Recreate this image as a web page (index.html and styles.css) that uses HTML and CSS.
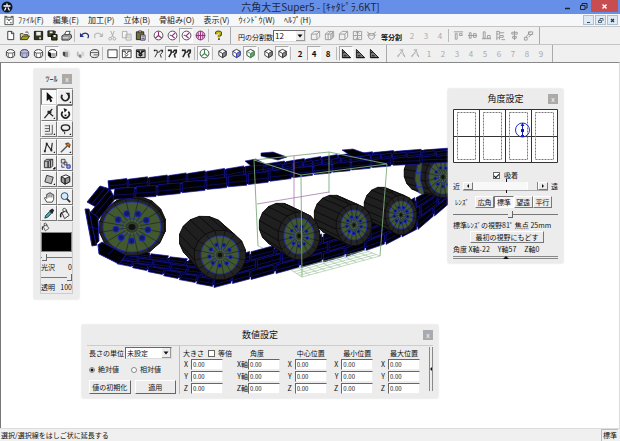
FILE: index.html
```html
<!DOCTYPE html>
<html lang="ja">
<head>
<meta charset="utf-8">
<title>六角大王Super5</title>
<link rel="stylesheet" href="styles.css">
</head>
<body>
<svg class="sprites" aria-hidden="true">
  <symbol id="logo" viewBox="0 0 12 12"><circle cx="6" cy="6" r="5.5" fill="#101828"/><path d="M2.500 5h7M6 2.500V5M5 6.500 3.500 9.500M7 6.500l1.500 3" stroke="#fff" stroke-width="1.300"/></symbol>
  <symbol id="doc" viewBox="0 0 12 12"><path d="M1.500 2.500h9v8h-9z" fill="#fff" stroke="#444"/><path d="M1 1.500h3M8 1.500h3M3 4.500h2l1 2 1-2h2M4 8.500h1M7 8.500h2" stroke="#444" fill="none"/></symbol>
  <symbol id="new" viewBox="0 0 12 12"><path d="M3 1.500h4.500l2 2v7H3z" fill="#fff" stroke="#333"/><path d="M7 1.500v2.500h2.500" stroke="#333" fill="none"/></symbol>
  <symbol id="open" viewBox="0 0 12 12"><path d="M1.500 10V4h3l1 1h4v2" fill="#e8e070" stroke="#444"/><path d="M1.500 10.500 4 6.500h7.500l-2.500 4z" fill="#a8a010" stroke="#333"/><path d="M7 2.500q2-1.500 3.500 1" stroke="#333" fill="none"/></symbol>
  <symbol id="save" viewBox="0 0 12 12"><path d="M1.500 1.500h9v9h-9z" fill="#333a18" stroke="#111"/><path d="M3.500 2h5v4h-5z" fill="#eee"/><path d="M7 8h1.500v2H7z" fill="#fff"/></symbol>
  <symbol id="saves" viewBox="0 0 12 12"><path d="M1 1h7v6H1zM5 5h6v6H5z" fill="#3c4012" stroke="#111"/><path d="M3 1.500h3v2H3zM7 5.500h2.500v2H7z" fill="#eee"/><path d="M9 1v3" stroke="#222"/></symbol>
  <symbol id="print" viewBox="0 0 12 12"><path d="M1 6.500 4 4.500h6.500l1 2v2l-3 2.500H1z" fill="#999" stroke="#333"/><path d="m4 5 1.500-3.500H10L8.500 5z" fill="#fff" stroke="#444"/><path d="M2 8.500h6" stroke="#eee"/></symbol>
  <symbol id="undo" viewBox="0 0 12 12"><path d="M2 6.500Q5 2 9 4q2.500 2 .5 5" stroke="currentColor" stroke-width="1.300" fill="none"/><path d="M1 3v4.500h4.500z" fill="currentColor"/></symbol>
  <symbol id="cut" viewBox="0 0 12 12"><path d="M4 1l3 7M8 1 5 8" stroke="#aaa"/><circle cx="3.500" cy="9.500" r="1.500" fill="none" stroke="#aaa"/><circle cx="8" cy="9.500" r="1.500" fill="none" stroke="#aaa"/></symbol>
  <symbol id="copy" viewBox="0 0 12 12"><path d="M1.500 1.500h5v7h-5zM5.500 4.500h5.500v6.500H5.500z" fill="#f4f4f4" stroke="#aaa"/><path d="M7 6.500h3M7 8.500h3" stroke="#bbb"/></symbol>
  <symbol id="paste" viewBox="0 0 12 12"><path d="M1.500 2h8v8.500h-8z" fill="#77702a" stroke="#222"/><path d="M4 1h3v2H4z" fill="#ddd" stroke="#333"/><path d="M6 5.500h5v5.500H6z" fill="#fff" stroke="#335"/><path d="M7 7.500h3M7 9.500h3" stroke="#335"/></symbol>
  <symbol id="ball" viewBox="0 0 12 12"><circle cx="6" cy="6" r="4.800" fill="#fff" stroke="#444"/><path d="M6 1.500V6L2.500 9M6 6l3.500 3" stroke="currentColor" stroke-width="1.200" fill="none"/></symbol>
  <symbol id="ball2" viewBox="0 0 12 12"><circle cx="6" cy="6" r="4.800" fill="#fff" stroke="#444"/><path d="M9 3 5.500 6.500 3 5.500M5.500 6.500l3 2.500" stroke="#a03090" stroke-width="1.200" fill="none"/></symbol>
  <symbol id="globe" viewBox="0 0 12 12"><circle cx="6" cy="6" r="4.800" fill="#f6cfe8" stroke="#703068"/><path d="M6 1v10M1 6h10M3.500 2.500v7M8.500 2.500v7" stroke="#902878"/></symbol>
  <symbol id="help" viewBox="0 0 12 12"><path d="M3.500 4.500V2.800q2.500-2 5 0V5L6.500 6.500V8" stroke="#555000" stroke-width="2.600" fill="none"/><path d="M4 4V3q2-1.500 4 0v1.500L6.500 6v1.500" stroke="#d8c800" stroke-width="1.200" fill="none"/><path d="M5.500 9h2v2h-2z" fill="#555000"/></symbol>
  <symbol id="cyl" viewBox="0 0 12 12"><path d="M1.500 4q1-2.300 4.500-2.300T10.500 4v4.500Q9.500 10.500 6 10.500T1.500 8.500z" fill="#fff" stroke="#333"/><path d="M1.500 4 3.500 5.500h5l2-1.500M3.500 5.500v4.500M8.500 5.500v4.500" stroke="#555" fill="none"/></symbol>
  <symbol id="cylb" viewBox="0 0 12 12"><path d="M1.500 4q1-2.300 4.500-2.300T10.500 4v4.500Q9.500 10.500 6 10.500T1.500 8.500z" fill="#b8bce8" stroke="#334"/><path d="M1.500 4 3.500 5.500h5l2-1.500M3.500 5.500v4.500M8.500 5.500v4.500" stroke="#778" fill="none"/></symbol>
  <symbol id="cyld" viewBox="0 0 12 12"><path d="M1.500 4q1-2.300 4.500-2.300T10.500 4v4.500Q9.500 10.500 6 10.500T1.500 8.500z" fill="#fff" stroke="#222"/><path d="M1.500 4 4.500 5.500V10.500L1.500 8.500z" fill="#111"/><path d="M4.500 5.500h5v4h-5z" fill="#aaa"/></symbol>
  <symbol id="shade" viewBox="0 0 12 12"><path d="M2 4h3v6L2 8z" fill="#444"/><path d="M5 4h3v6H5z" fill="#999"/><path d="M8 4h2v5L8 10zM2 3.500 5 2h3l2 1.500z" fill="#ddd"/></symbol>
  <symbol id="shade2" viewBox="0 0 12 12"><path d="M2 4h2v5H2z" fill="#bbb"/><path d="M4 7h3v4L4 10z" fill="#888"/><path d="M7 4h3v5H7z" fill="#d5d5d5"/></symbol>
  <symbol id="cylr" viewBox="0 0 12 12"><path d="M1.500 4q1-2.300 5-2.300T10.500 4v4.500Q9.500 10.500 6 10.500T1.500 8.500z" fill="#eee" stroke="#333"/><path d="M2 5h8M5 7.500h5" stroke="#555"/></symbol>
  <symbol id="sq" viewBox="0 0 12 12"><path d="M1 2h10v8.500H1z" fill="#fff" stroke="#333"/></symbol>
  <symbol id="frame" viewBox="0 0 12 12"><path d="M1.500 2h9.500v8.500H1.500z" fill="#fff" stroke="#333"/><path d="M2 3.500h2.500v1.500L6 6l1.500-1V3.500h3M4 7l2 1.500L8 7M4 9.500h1" stroke="#222" fill="none"/></symbol>
  <symbol id="framed" viewBox="0 0 12 12"><path d="M1.500 2h9.500v8.500H1.500z" fill="#ccc" stroke="#111"/><path d="M2 3.500h2.500v1.500L6 6l1.500-1V3.500h3M4 7l2 1.500L8 7" stroke="#111" stroke-width="1.600" fill="none"/></symbol>
  <symbol id="fig" viewBox="0 0 12 12"><path d="M1 2.500h3.500v3L2 10M4.500 4.500H7L8 2.500h2v2.500L8 7l1 3.500" stroke="#222" stroke-width="var(--w,1)" fill="none"/><path d="M1 2h1.500v1.500H1zM9.500 2H11v2H9.500z" fill="#222"/></symbol>
  <symbol id="hex" viewBox="0 0 12 12"><path d="m2 3.500 4-2 4 2v4.500l-4 2.500L2 8z" fill="#fff" stroke="#333"/><path d="M6 6 2 3.500M6 6v4.500L10 8V3.500z" fill="#888" stroke="currentColor"/></symbol>
  <symbol id="tri" viewBox="0 0 12 12"><path d="M1.500 1.500v9h9z" fill="#777" stroke="#111"/><path d="M3 8.500h3M2 5h2M1.500 10.500h9" stroke="#111"/></symbol>
  <symbol id="box" viewBox="0 0 12 12"><path d="M1.500 4.500h6v6h-6zM1.500 4.500l3-3h6v6l-3 3M7.500 4.500l3-3" fill="none" stroke="#999"/></symbol>
  <symbol id="box2" viewBox="0 0 12 12"><path d="M1.500 4.500h6v6h-6zM1.500 4.500l3-3h6v6l-3 3M7.500 4.500l3-3M4.500 4.500v6M4.500 4.500l3-3M9 3v6" fill="none" stroke="#999"/></symbol>
  <symbol id="boxx" viewBox="0 0 12 12"><path d="M1.500 1.500h9v9h-9zM6 2v8M2 6h8M4 4l2-2 2 2M4 8l2 2 2-2" fill="none" stroke="#999"/></symbol>
  <symbol id="boxo" viewBox="0 0 12 12"><path d="m1 2 3 2M11 2 8 4M3 4h6v4.500l-3 2-3-2zM3 5q3 2 6 0M1 5l2 2M11 5 9 7" fill="none" stroke="#999"/></symbol>
  <symbol id="al1" viewBox="0 0 12 12"><path d="M1 2h10M2.500 4h2v6h-2zM7 4h3v2H7z" stroke="#999" fill="none"/></symbol>
  <symbol id="al2" viewBox="0 0 12 12"><path d="M1 6h10M2.500 3h2v6h-2zM7 4h3v4H7z" stroke="#999" fill="#eee"/></symbol>
  <symbol id="al3" viewBox="0 0 12 12"><path d="M1 9.500h10M2.500 2h2v7h-2zM7 6h3v3H7z" stroke="#999" fill="none"/></symbol>
  <symbol id="al4" viewBox="0 0 12 12"><path d="M2 1.500h3v3H2M5 3h5M2 8.500h3v2M5 6h4v2H5zM7 10.500h4M2 1v10" stroke="#999" fill="none"/></symbol>
  <symbol id="al5" viewBox="0 0 12 12"><path d="M6 1v10M3 2.500h6v2H3zM4 7h4v2H4z" stroke="#999" fill="#eee"/></symbol>
  <symbol id="al6" viewBox="0 0 12 12"><path d="M1.500 8h3v3h-3zM6 2h4.500v3H6zM3 8l5-6M6 8 10 4" stroke="#999" fill="none"/></symbol>
  <symbol id="brk" viewBox="0 0 12 12"><path d="M4 2h4M7 2 2 10M6.500 3l3 6M1.500 9l1.500-2M8 8l2 2M6 6l1 1" stroke="#aaa" fill="none"/></symbol>
  <symbol id="t-arrow" viewBox="0 0 14 14"><path d="M4 1v10l2.500-2.500L8 12l2-1-1.700-3.200H11z" fill="#111"/></symbol>
  <symbol id="t-rot" viewBox="0 0 14 14"><path d="M3.500 4a4 4 0 1 0 6.500 0" fill="none" stroke="#222" stroke-width="1.700"/><path d="M7 2h4.500v4.500z" fill="#222"/><path d="M11 13h2v-2z" fill="#111"/></symbol>
  <symbol id="t-line" viewBox="0 0 14 14"><path d="M1.500 12 10 2M5 5l6 5" fill="none" stroke="#222" stroke-width="1.300"/><path d="M5 4h4v3H5zM11 13h2v-2z" fill="#222"/></symbol>
  <symbol id="t-rotd" viewBox="0 0 14 14"><path d="M4 5a4 4 0 1 0 6 0" fill="none" stroke="#222" stroke-width="1.800"/><path d="M5 1l4 2-3 3zM6 8h2v2H6z" fill="#222"/></symbol>
  <symbol id="t-lad" viewBox="0 0 14 14"><path d="M2 3h5M2 6h5M2 9h3M2 12h8V2M7 2v7M4 9h3" fill="none" stroke="#555"/><path d="M11 13h2v-2z" fill="#111"/></symbol>
  <symbol id="t-las" viewBox="0 0 14 14"><ellipse cx="7" cy="5" rx="4.500" ry="3" fill="none" stroke="#222" stroke-width="1.500"/><path d="M4 7q-1 2 1 2t1 3" fill="none" stroke="#222"/><path d="M11 13h2v-2z" fill="#111"/></symbol>
  <symbol id="t-poly" viewBox="0 0 14 14"><path d="M2 11 4 3l5 7 1-8" fill="none" stroke="#222" stroke-width="1.200"/><path d="M3 2h2v2H3zM8 9h2v2H8zM1 10h2v2H1zM11 13h2v-2z" fill="#222"/></symbol>
  <symbol id="t-pen" viewBox="0 0 14 14"><path d="M2 12 9 5" stroke="#555" stroke-width="1.500"/><path d="m7 3 4 4 1-3-2-2z" fill="#d87820" stroke="#503010"/><path d="M11 13h2v-2z" fill="#111"/></symbol>
  <symbol id="t-ext" viewBox="0 0 14 14"><path d="M1.500 4.500h4v7h-4zM1.500 4.500l2-2h7v7l-2 2h-3v-7l5-2" fill="#bbb" stroke="#333"/><path d="M8 4v7M11 13h2v-2z" stroke="#222"/></symbol>
  <symbol id="t-mul" viewBox="0 0 14 14"><path d="M2.500 2.500h4v4h-4zM5.500 5.500h3v3h-3z" fill="#ddd" stroke="#444"/><path d="M8.500 8.500H12V12H8.500z" fill="#9ab0ff" stroke="#2030a0"/><path d="M3 8v3h3" fill="none" stroke="#2030a0"/></symbol>
  <symbol id="t-face" viewBox="0 0 14 14"><path d="m4 2.500 7 2-2 7-7-2z" fill="#bbb" stroke="#333"/><path d="M11 13h2v-2z" fill="#111"/></symbol>
  <symbol id="t-cube" viewBox="0 0 14 14"><path d="m2.500 4 5-2 4 2v5.500l-5 2.500-4-2.500z" fill="#fff" stroke="#222"/><path d="M2.500 4 6.500 6v6L2.500 9.500zM6.500 6l5-2v5.500L6.500 12z" fill="#999" stroke="#222"/></symbol>
  <symbol id="t-hand" viewBox="0 0 14 14"><path d="M4 12 1.500 7.500 3 7l1 1V3.500h1.500V2.500H7V2h1.500v1H10v1h1.500v5L10 12z" fill="#fff" stroke="#444"/><path d="M5.500 4v3M7.500 3v4M9.500 4v3" stroke="#555"/></symbol>
  <symbol id="t-zoom" viewBox="0 0 14 14"><path d="m8 8 4 4" stroke="#333" stroke-width="2"/><circle cx="6" cy="5.500" r="3.700" fill="#cfeaff" stroke="#246"/></symbol>
  <symbol id="t-drop" viewBox="0 0 14 14"><path d="m2 12 1-3 4-4 2 2-4 4z" fill="#38b8b8" stroke="#234"/><path d="m6.500 4 3.500 3.500 2-4-2-2z" fill="#222"/></symbol>
  <symbol id="t-fill" viewBox="0 0 14 14"><path d="M3 6 8 4l3 5-5 3.500z" fill="#eee" stroke="#333"/><path d="M5 6q-2-5 1-4.500T8 6" fill="none" stroke="#333"/><path d="M3 6q-2 2-1 5" stroke="#222" stroke-width="1.500" fill="none"/></symbol>
</svg>

<header class="titlebar">
  <svg class="icon"><use href="#logo"/></svg>
  <h1 class="title">六角大王Super5 - [ｷｬﾀﾋﾟﾗ.6KT]</h1>
  <div class="winbtns">
    <button class="winbtn" aria-label="最小化"><svg viewBox="0 0 9 9"><path d="M2 6.500h5" stroke="#222" stroke-width="1.500"/></svg></button>
    <button class="winbtn" aria-label="元に戻す"><svg viewBox="0 0 9 9"><path d="M1.500 3.500h4.500v4H1.500zM3 3V1.500h5V6H6.500" stroke="#222" fill="none"/></svg></button>
    <button class="winbtn winbtn-close" aria-label="閉じる"><svg viewBox="0 0 9 9"><path d="m2.500 2.500 4 4M6.500 2.500l-4 4" stroke="#fff" stroke-width="1.400"/></svg></button>
  </div>
</header>

<nav class="menubar">
  <svg class="icon"><use href="#doc"/></svg>
  <a href="#">ﾌｧｲﾙ(F)</a><a href="#">編集(E)</a><a href="#">加工(P)</a><a href="#">立体(B)</a><a href="#">骨組み(O)</a><a href="#">表示(V)</a><a href="#">ｳｨﾝﾄﾞｳ(W)</a><a href="#">ﾍﾙﾌﾟ(H)</a>
  <div class="mdi">
    <button aria-label="文書を最小化"><svg viewBox="0 0 9 9"><path d="M3 6.500h3" stroke="#345"/></svg></button>
    <button aria-label="文書を元に戻す"><svg viewBox="0 0 9 9"><path d="M2.500 4.500h3v2h-3zM4 4V2.500h3V5" stroke="#567" fill="none"/></svg></button>
    <button aria-label="文書を閉じる"><svg viewBox="0 0 9 9"><path d="m3 3 3 3M6 3 3 6" stroke="#234" stroke-width="1.200"/></svg></button>
  </div>
</nav>

<div class="toolbar">
  <div class="group">
    <button aria-label="新規"><svg><use href="#new"/></svg></button><button aria-label="開く"><svg><use href="#open"/></svg></button><button aria-label="保存"><svg><use href="#save"/></svg></button><button aria-label="別名保存"><svg><use href="#saves"/></svg></button><button aria-label="印刷"><svg><use href="#print"/></svg></button>
    <i class="sep"></i>
    <button class="navy" aria-label="取り消し"><svg><use href="#undo"/></svg></button><button class="off flip" aria-label="やり直し"><svg><use href="#undo"/></svg></button><button aria-label="切り取り"><svg><use href="#cut"/></svg></button><button aria-label="コピー"><svg><use href="#copy"/></svg></button><button aria-label="貼り付け"><svg><use href="#paste"/></svg></button>
    <i class="sep"></i>
    <button class="plum" aria-label="正面"><svg><use href="#ball"/></svg></button><button aria-label="側面"><svg><use href="#ball2"/></svg></button><button class="down" aria-label="斜め"><svg><use href="#ball2"/></svg></button><button aria-label="四面"><svg><use href="#globe"/></svg></button>
    <i class="sep"></i>
    <button aria-label="説明"><svg><use href="#help"/></svg></button>
  </div>
  <div class="group group-wide">
    <label for="div">円の分割数</label>
    <span class="combo combo-div"><select id="div"><option>12</option></select><svg viewBox="0 0 7 9"><path d="M1 3.500h5l-2.500 3z"/></svg></span>
    <button aria-label="面"><svg><use href="#box"/></svg></button><button aria-label="分割"><svg><use href="#box2"/></svg></button><button aria-label="箱"><svg><use href="#box"/></svg></button><button aria-label="十字"><svg><use href="#boxx"/></svg></button><button aria-label="開口"><svg><use href="#boxo"/></svg></button>
    <b class="caption">等分割</b>
    <button class="off">2</button><button class="off">3</button><button class="off">4</button>
    <i class="sep"></i>
    <button aria-label="上揃え"><svg><use href="#al1"/></svg></button><button aria-label="中揃え"><svg><use href="#al2"/></svg></button><button aria-label="下揃え"><svg><use href="#al3"/></svg></button><button aria-label="左揃え"><svg><use href="#al4"/></svg></button><button aria-label="中央揃え"><svg><use href="#al5"/></svg></button><button aria-label="斜め揃え"><svg><use href="#al6"/></svg></button>
  </div>
</div>

<div class="toolbar">
  <div class="group">
    <button aria-label="線"><svg><use href="#cyl"/></svg></button><button aria-label="半透明"><svg><use href="#cylb"/></svg></button><button aria-label="隠線"><svg><use href="#cyl"/></svg></button><button class="down" aria-label="面と線"><svg><use href="#cyld"/></svg></button><button aria-label="面"><svg><use href="#shade"/></svg></button><button aria-label="滑らか"><svg><use href="#shade2"/></svg></button><button aria-label="輪郭"><svg><use href="#cylr"/></svg></button>
    <i class="sep"></i>
    <button aria-label="背景なし"><svg><use href="#sq"/></svg></button><button class="down" aria-label="背景"><svg><use href="#frame"/></svg></button><button aria-label="濃い背景"><svg><use href="#framed"/></svg></button>
    <i class="sep"></i>
    <button aria-label="骨格1"><svg><use href="#fig"/></svg></button><button class="down bold" aria-label="骨格2"><svg><use href="#fig"/></svg></button><button class="bold" aria-label="骨格3"><svg><use href="#fig"/></svg></button>
    <i class="sep"></i>
    <button class="down green" aria-label="軸"><svg><use href="#ball"/></svg></button>
    <i class="sep"></i>
    <button aria-label="面選択"><svg><use href="#hex"/></svg></button><button class="blue" aria-label="辺選択"><svg><use href="#hex"/></svg></button><button class="down green" aria-label="点選択"><svg><use href="#hex"/></svg></button>
    <i class="sep"></i>
    <button aria-label="表面"><svg><use href="#hex"/></svg></button><button class="down" aria-label="裏面"><svg><use href="#hex"/></svg></button>
    <i class="sep"></i>
    <button>2</button><button class="down">4</button><button>8</button>
    <i class="sep"></i>
    <button class="down" aria-label="定規1"><svg><use href="#tri"/></svg></button><button aria-label="定規2"><svg><use href="#tri"/></svg></button><button aria-label="定規3"><svg><use href="#tri"/></svg></button>
  </div>
  <div class="group group-wide">
    <button aria-label="関節1"><svg><use href="#brk"/></svg></button><button aria-label="関節2"><svg><use href="#brk"/></svg></button><button class="off">1</button><button class="off">2</button><button class="off">3</button><button class="off">4</button><button class="off">5</button><button class="off">6</button><button class="off">7</button><button class="off">8</button><button class="off">9</button>
  </div>
</div>

<main class="workspace">
  <svg class="scene" id="scene" viewBox="0 64 620 364" preserveAspectRatio="xMinYMin meet" role="img" aria-label="キャタピラ"></svg>

  <section class="panel tools">
    <div class="panel-head"><h2>ﾂｰﾙ</h2><button class="close" aria-label="ツールを閉じる">x</button></div>
    <div class="toolgrid">
      <button class="down" aria-label="選択"><svg><use href="#t-arrow"/></svg></button><button aria-label="回転"><svg><use href="#t-rot"/></svg></button>
      <button aria-label="線"><svg><use href="#t-line"/></svg></button><button class="down" aria-label="視点回転"><svg><use href="#t-rotd"/></svg></button>
      <button aria-label="はしご"><svg><use href="#t-lad"/></svg></button><button aria-label="投げ縄"><svg><use href="#t-las"/></svg></button>
    </div>
    <div class="toolgrid">
      <button aria-label="折れ線"><svg><use href="#t-poly"/></svg></button><button aria-label="ペン"><svg><use href="#t-pen"/></svg></button>
      <button aria-label="押し出し"><svg><use href="#t-ext"/></svg></button><button aria-label="複製"><svg><use href="#t-mul"/></svg></button>
      <button aria-label="面張り"><svg><use href="#t-face"/></svg></button><button aria-label="立方体"><svg><use href="#t-cube"/></svg></button>
    </div>
    <div class="toolgrid">
      <button aria-label="手"><svg><use href="#t-hand"/></svg></button><button aria-label="拡大"><svg><use href="#t-zoom"/></svg></button>
      <button aria-label="スポイト"><svg><use href="#t-drop"/></svg></button><button aria-label="塗り"><svg><use href="#t-fill"/></svg></button>
    </div>
    <div class="paint">
      <svg class="pail"><use href="#t-fill"/></svg>
      <button class="swatch" aria-label="色"></button>
      <input id="gloss" type="range" value="5">
      <div class="pair"><label for="gloss">光沢</label><output>0</output></div>
      <input id="alpha" type="range" value="100">
      <div class="pair"><label for="alpha">透明</label><output>100</output></div>
    </div>
  </section>

  <section class="panel angle">
    <div class="panel-head"><h2>角度設定</h2><button class="close" aria-label="角度設定を閉じる">x</button></div>
    <svg class="orbit" viewBox="0 0 105 54">
      <path d="M.5.5h104v53H.5zM26.500 0v54M52.500 0v54M78.500 0v54M0 27.500h105" fill="none" stroke="#333"/>
      <path d="M4.500 3.500h18v47h-18zM30.500 3.500h18v47h-18zM56.500 3.500h18v47h-18zM82.500 3.500h18v47h-18z" fill="none" stroke="#777" stroke-dasharray="2 1"/>
      <circle cx="69.500" cy="21" r="7" fill="none" stroke="#2030c0"/><path d="M69.500 14v14" stroke="#1020b0"/><path d="m67.500 17 2-3 2 3zM68 20h3v3h-3zM68 26h3v2h-3z" fill="#1020b0"/>
    </svg>
    <label class="snap"><input type="checkbox" checked> 吸着</label>
    <div class="distance">
      <span>近</span>
      <div class="scroll">
        <button aria-label="近づける"><svg viewBox="0 0 8 8"><path d="M5 2v4L3 4z"/></svg></button>
        <span class="trough"></span><span class="grip"></span>
        <button aria-label="遠ざける"><svg viewBox="0 0 8 8"><path d="M3 2v4l2-2z"/></svg></button>
      </div>
      <span>遠</span>
    </div>
    <div class="lens"><span>ﾚﾝｽﾞ</span><button>広角</button><button class="down">標準</button><button>望遠</button><button>平行</button></div>
    <input class="focal" type="range" value="55" aria-label="焦点">
    <p class="note">標準ﾚﾝｽﾞの視野81ﾟ 焦点 25mm</p>
    <button class="reset">最初の視野にもどす</button>
    <p class="axes"><span>角度 X軸-22</span><span>Y軸57</span><span>Z軸0</span></p>
    <div class="fold"><svg viewBox="0 0 6 3"><path d="M0 3h6L3 0z"/></svg></div>
  </section>

  <section class="panel numeric">
    <div class="panel-head"><h2>数値設定</h2><button class="close" aria-label="数値設定を閉じる">x</button></div>
    <div class="numeric-body">
      <div class="units">
        <div class="unit-row"><label for="unit">長さの単位</label><span class="combo combo-unit"><select id="unit"><option>未設定</option></select><svg viewBox="0 0 7 9"><path d="M1 3.500h5l-2.500 3z"/></svg></span></div>
        <div class="radio-row"><label><input type="radio" name="mode" checked> 絶対値</label><label><input type="radio" name="mode"> 相対値</label></div>
        <div class="btn-row"><button>値の初期化</button><button>適用</button></div>
      </div>
      <fieldset class="vec vec-size"><legend>大きさ <label class="same"><input type="checkbox"> 等倍</label></legend>
        <label>X<input value="0.00"></label><label>Y<input value="0.00"></label><label>Z<input value="0.00"></label></fieldset>
      <fieldset class="vec vec-angle"><legend>角度</legend>
        <label>X軸<input value="0.00"></label><label>Y軸<input value="0.00"></label><label>Z軸<input value="0.00"></label></fieldset>
      <fieldset class="vec"><legend>中心位置</legend>
        <label>X<input value="0.00"></label><label>Y<input value="0.00"></label><label>Z<input value="0.00"></label></fieldset>
      <fieldset class="vec"><legend>最小位置</legend>
        <label>X<input value="0.00"></label><label>Y<input value="0.00"></label><label>Z<input value="0.00"></label></fieldset>
      <fieldset class="vec"><legend>最大位置</legend>
        <label>X<input value="0.00"></label><label>Y<input value="0.00"></label><label>Z<input value="0.00"></label></fieldset>
      <div class="fold-side"><svg viewBox="0 0 3 6"><path d="M3 0v6L0 3z"/></svg></div>
    </div>
  </section>
</main>

<footer class="status"><span>選択/選択線をはしご状に延長する</span><span class="mode">標準</span></footer>
<script src="scene.js"></script>
</body>
</html>
```
FILE: styles.css
```css
* { box-sizing: border-box; }

body {
  margin: 0;
  min-height: 100vh;
  display: flex;
  flex-direction: column;
  background: #efefef;
  color: #111;
  font: 7px/9px "Noto Sans CJK JP", "Liberation Sans", sans-serif;
  overflow: hidden;
}

button, input, select, output { font: inherit; color: inherit; margin: 0; padding: 0; border-radius: 0; }
button { display: flex; align-items: center; justify-content: center; border: 0; background: none; white-space: nowrap; }
h1, h2, p { margin: 0; font-weight: 400; }
label, span, h2 { white-space: nowrap; }
.sprites { position: absolute; width: 0; height: 0; }
.icon { width: 12px; height: 12px; flex: none; }

/* Window frame */
.titlebar { display: grid; grid-template-columns: 1fr auto 1fr; align-items: center; height: 14px; padding-left: 1px; background: #668fe8; }
.title { font-size: 10px; line-height: 14px; color: #1c2840; }
.winbtns { display: flex; justify-self: end; align-self: start; margin-right: 2px; }
.winbtn { width: 16px; height: 12px; }
.winbtn svg { width: 9px; height: 9px; }
.winbtn-close { width: 27px; background: #c84d50; }

.menubar { display: flex; align-items: center; gap: 9px; height: 12px; padding-left: 3px; background: #f5f7f8; font-size: 8px; line-height: 12px; }
.menubar .icon { margin-right: -6px; height: 11px; }
.menubar a { color: #222; text-decoration: none; white-space: nowrap; }
.mdi { display: flex; gap: 1px; margin-left: auto; margin-right: 2px; }
.mdi button { width: 11px; height: 10px; border: 1px solid #a9bfd2; background: #dfeaf4; }
.mdi svg { width: 9px; height: 9px; }

/* Toolbars */
.toolbar { display: flex; height: 18px; border-top: 1px solid #c4c4c4; background: #f0f0f0; }
.group { display: flex; align-items: center; padding: 0 5px 0 3px; border-right: 1px solid #aaa; }
.group-wide { padding-left: 7px; padding-right: 4px; }
.group button { width: 14px; height: 15px; font-size: 8px; font-weight: 700; flex: none; }
.group button svg { width: 11px; height: 11px; color: #333; }
.group .down { background: #f8f8f8; border: 1px solid; border-color: #aaa #fff #fff #aaa; }
.group .off { color: #aaa; font-weight: 400; }
.group .off svg { color: #bbb; }
.group .navy svg { color: #223080; }
.group .plum svg { color: #902878; }
.group .green svg { color: #389048; }
.group .blue svg { color: #2838c0; }
.group .bold { --w: 1.6; }
.flip svg { transform: scaleX(-1); }
.sep { width: 1px; height: 13px; margin: 0 2px 0 1px; background: #bbb; }
.caption { width: 27px; text-align: center; font-weight: 700; align-self: flex-end; line-height: 13px; }
.group label { line-height: 13px; align-self: flex-end; }

.combo { position: relative; display: inline-flex; border: 1px solid; border-color: #666 #ddd #ddd #666; background: #fff; }
.combo select { appearance: none; width: 100%; border: 0; background: none; outline: 0; padding-left: 1px; }
.combo svg { position: absolute; top: 0; right: 0; width: 9px; height: 100%; background: #eee; border-right: 1px solid #999; border-bottom: 1px solid #999; }
.combo-div { width: 33px; height: 12px; margin-right: 2px; font-size: 8px; line-height: 10px; }
.combo-unit { width: 47px; height: 12px; line-height: 10px; }

/* Canvas */
.workspace { position: relative; flex: 1; background: #fff; border-top: 1px solid #888; border-left: 1px solid #777; border-right: 1px solid #ddd; }
.scene { position: absolute; top: 0; left: 0; width: 620px; }

.panel { position: absolute; background: #ececec; box-shadow: 0 0 2px #ccc; }
.panel-head { display: grid; grid-template-columns: 10px 1fr 10px; align-items: center; text-align: center; height: 20px; }
.panel-head h2 { grid-column: 2; font-size: 9px; line-height: 12px; }
.close { width: 10px; height: 10px; background: #aaa; color: #fff; font-size: 7px; line-height: 8px; }
.panel svg { fill: #111; }

input[type="range"] { appearance: none; display: block; width: 100%; height: 9px; background: linear-gradient(#777, #777) center / 100% 1px no-repeat; }
input[type="range"]::-webkit-slider-thumb { appearance: none; width: 5px; height: 7px; background: #ececec; border-right: 1px solid #666; border-bottom: 1px solid #666; }

input[type="checkbox"] { appearance: none; flex: none; width: 7px; height: 7px; border: 1px solid #666; background: #fff; display: grid; place-items: center; }
input[type="checkbox"]:checked::before { content: ""; width: 4px; height: 2px; border: solid #111; border-width: 0 0 1px 1px; transform: rotate(-45deg); }
input[type="radio"] { appearance: none; width: 6px; height: 6px; border: 1px solid #888; border-radius: 50%; background: #fff; }
input[type="radio"]:checked { background: radial-gradient(#111 1px, #fff 2px); }

.tools { left: 33px; top: 6px; width: 45px; padding: 0 6px 5px; }
.tools .panel-head { grid-template-columns: 1fr 10px; height: 19px; }
.tools .panel-head h2 { grid-column: 1; font-size: 8px; }
.tools .close { margin-left: -1px; }
.toolgrid { display: grid; grid-template-columns: 1fr 1fr; grid-auto-rows: 16px; margin-bottom: 1px; border: solid #999; border-width: 1px 0 0 1px; }
.toolgrid button { border: 1px solid; border-color: #fff #777 #777 #fff; background: #f0f0f0; }
.toolgrid .down { background: #fafafa; border-color: #777 #ccc #ccc #777; }
.toolgrid svg { width: 13px; height: 13px; }
.paint { border: 1px solid #ccc; border-top: 0; }
.pail { display: block; width: 10px; height: 10px; }
.swatch { display: block; width: 100%; height: 20px; background: #000; border: 1px solid #888; margin-bottom: 1px; }
.pair { display: flex; justify-content: space-between; line-height: 11px; }

.angle { left: 447px; top: 26px; width: 115px; padding: 0 5px 4px; }
.orbit { display: block; width: 100%; background: #fff; }
.snap { display: flex; justify-content: center; align-items: center; gap: 4px; margin-top: 8px; line-height: 9px; }
.distance { display: flex; align-items: center; justify-content: space-between; height: 13px; }
.scroll { position: relative; display: flex; width: 85px; height: 9px; border: solid #aaa; border-width: 0 0 1px; }
.scroll::before { content: ""; position: absolute; left: 50%; top: -3px; width: 1px; height: 14px; background: linear-gradient(#111 3px, transparent 3px 11px, #111 11px); }
.scroll button { width: 10px; border: 1px solid; border-color: #fff #777 #777 #fff; }
.scroll svg { width: 8px; height: 8px; }
.trough { flex: 1; background: #f8f8f8; }
.grip { width: 11px; border-right: 1px solid #888; border-left: 1px solid #fff; }
.lens { display: flex; align-items: center; margin: 3px 6px 0 2px; }
.lens span { width: 20px; }
.lens button { flex: 1; height: 12px; border: 1px solid; border-color: #fff #777 #777 #fff; }
.lens .down { border-color: #777 #fff #fff #777; background: #f8f8f8; }
.focal { margin: 2px 0 1px; }
.note { line-height: 11px; white-space: nowrap; }
.reset { width: 74px; height: 12px; margin-left: 17px; border: 1px solid; border-color: #fff #777 #777 #fff; }
.axes { display: flex; gap: 8px; line-height: 12px; }
.fold { height: 3px; border: solid #888; border-width: 1px 0; margin-top: 1px; }
.fold svg { display: block; width: 6px; height: 3px; margin: -1px auto 0; }

.numeric { left: 81px; top: 262px; width: 356px; padding: 0 5px 4px; }
.numeric-body { display: flex; padding-left: 2px; border-top: 1px solid #ccc; }
.units { display: flex; flex-direction: column; width: 91px; gap: 5px; padding: 1px 3px 0 0; border-right: 1px solid #bbb; }
.unit-row { display: flex; align-items: center; gap: 1px; }
.radio-row { display: flex; gap: 12px; padding: 1px 0; }
.radio-row label { display: flex; align-items: center; gap: 3px; }
.btn-row { display: flex; gap: 4px; }
.btn-row button { flex: 1; height: 14px; border: 1px solid; border-color: #fff #666 #666 #fff; }
.vec { display: grid; flex: 1; gap: 1px; margin: 0; padding: 0; border: 0; min-width: 0; align-content: start; }
.vec legend { padding: 1px 2px 0 0; text-align: right; width: 100%; line-height: 12px; white-space: nowrap; }
.vec > label { display: flex; justify-content: flex-end; align-items: center; gap: 3px; }
.vec > label input { width: 32px; height: 11px; padding-left: 1px; border: 1px solid; border-color: #666 #eee #eee #666; background: #fff; font-size: 6px; line-height: 9px; }
.vec-size { flex: 0 0 43px; }
.vec-size legend { display: flex; gap: 4px; padding-left: 3px; }
.same { display: flex; align-items: center; gap: 3px; }
.vec-angle { flex: 0 0 57px; }
.vec-angle > label { gap: 0; }
.vec-angle legend { padding-right: 16px; }
.fold-side { width: 4px; margin: 1px 0 3px 9px; border: solid #888; border-width: 0 1px; display: flex; align-items: center; }
.fold-side svg { width: 3px; height: 6px; }

.status { display: flex; justify-content: space-between; align-items: center; height: 13px; padding: 0 2px 0 1px; border-top: 1px solid #ddd; background: #f0f0f0; line-height: 11px; }
.status .mode { border-left: 1px solid #bbb; border-top: 1px solid #bbb; padding: 0 1px; }
```
FILE: scene.js
```js
const scene = document.getElementById("scene");
const out = [];

const shape = (tag, attrs) =>
  out.push(`<${tag} ${Object.entries(attrs).map(([k, v]) => `${k}="${v}"`).join(" ")}/>`);
const poly = (pts, fill, stroke, width = 0.6) =>
  shape("polygon", { points: pts.map(p => p.map(n => n.toFixed(1)).join()).join(" "), fill, stroke, "stroke-width": width, "stroke-linejoin": "round" });
const line = (a, b, stroke, width = 0.6) =>
  shape("line", { x1: a[0], y1: a[1], x2: b[0], y2: b[1], stroke, "stroke-width": width });
const mix = (a, b, t) => [a[0] + (b[0] - a[0]) * t, a[1] + (b[1] - a[1]) * t];

const PAD = "#010106", EDGE = "#1616ac";

// Point at fraction t of a polyline's segment list.
function along(pts, t) {
  const s = Math.min(t * (pts.length - 1), pts.length - 1.0001);
  const i = Math.floor(s);
  return mix(pts[i], pts[i + 1], s - i);
}

// One belt of pads between an inner and an outer edge; lift tips each pad's outer corners.
function belt(inner, outer, count, rows, lift) {
  const mid = v => inner.map((_, k) => mix(inner[k], outer[k], v));
  poly([...mid(0.1), ...mid(0.9).reverse()], PAD, "none");
  for (let i = 0; i < count; i++) {
    const t0 = i / count, t1 = (i + 0.92) / count;
    for (let r = 0; r < rows; r++) {
      const shift = (r % 2) * 0.25 / count;
      const q = (t, v) => mix(along(inner, Math.min(t + shift, 1)), along(outer, Math.min(t + shift, 1)), v);
      const a = q(t0, r / rows), b = q(t1, r / rows);
      const c = q(t1, (r + 0.95) / rows), d = q(t0, (r + 0.95) / rows);
      a[1] += lift; c[1] -= lift;
      poly([a, b, c, d], PAD, EDGE, 0.7);
      line(mix(a, d, 0.6), mix(b, c, 0.6), EDGE, 0.5);
    }
  }
}

function wheel(back, front, rim) {
  const [bx, by, brx, bry] = back, [fx, fy, rx, ry] = front, [gx, gy] = rim;
  const ring = (x, y, a, b, n = 16) => Array.from({ length: n }, (_, i) => {
    const k = i / n * 2 * Math.PI + 0.2;
    return [x + a * Math.cos(k), y + b * Math.sin(k)];
  });
  const B = ring(bx, by, brx, bry), F = ring(fx, fy, rx, ry), G = ring(fx, fy, gx, gy);
  poly(B, "#1c1c1c", "#080808");
  B.forEach((p, i) => {
    const j = (i + 1) % 16;
    poly([p, B[j], F[j], F[i]], "#1f1f1f", "#080808", 0.6);
  });
  poly(F, "#242424", "#080808");
  F.forEach((p, i) => line(p, G[i], "#080808"));
  shape("ellipse", { cx: fx, cy: fy, rx: gx, ry: gy, fill: "#42582f", stroke: "#2030c8", "stroke-width": 0.8 });
  G.forEach(p => line([fx, fy], p, "#141e10", 0.6));
  const bolts = Math.max(gx * 0.11, 1.7);
  ring(fx, fy, gx * 0.56, gy * 0.56, 9).forEach(([x, y]) => {
    shape("circle", { cx: x, cy: y, r: bolts, fill: "#141c70", stroke: "#2230e8", "stroke-width": 0.6 });
    shape("circle", { cx: x, cy: y, r: 0.6, fill: "#080c30" });
  });
  shape("ellipse", { cx: fx, cy: fy, rx: gx * 0.34, ry: gy * 0.34, fill: "none", stroke: "#2434c8", "stroke-width": 0.5 });
  shape("ellipse", { cx: fx, cy: fy, rx: gx * 0.25, ry: gy * 0.25, fill: "#303f2b", stroke: "#7c8e78", "stroke-width": 0.7, "stroke-dasharray": "1 1" });
  shape("ellipse", { cx: fx, cy: fy, rx: gx * 0.12, ry: gy * 0.12, fill: "#101010" });
}

// Lower run.
belt([[122, 250], [150, 254], [188, 260], [214, 262], [250, 252], [300, 240], [345, 229], [385, 213], [415, 198], [450, 180]],
     [[116, 265], [147, 273], [178, 281], [213, 289], [250, 281], [300, 269], [345, 258], [385, 246], [417, 231], [450, 204]], 18, 3, 0.8);

// Far sprocket and the hub between its two tyres.
wheel([420, 174, 17, 19], [442, 178, 18, 21], [14, 17]);
poly([[417, 164], [421, 164], [419, 180], [423, 195], [418, 194], [414, 180]], "#42582f", "#2030c8", 0.7);
line([414, 174], [420, 174], "#2030c8", 1.4);
line([415, 188], [421, 188], "#2030c8", 1.4);

wheel([380, 207, 17, 19], [400, 216, 16, 20], [12, 14]);
wheel([332, 216, 19, 20], [353, 226, 18, 21], [13, 15]);
wheel([279, 226, 21, 22], [298, 237, 21, 24], [15, 18]);
wheel([203, 240, 25, 23], [219, 256, 26, 25], [19, 19]);
wheel([133, 226, 32, 29], [131, 228, 33, 29], [29, 25]);

// Nose of the belt around the front wheel.
const nose = [
  [[86, 203], [99, 187], [109, 190], [95, 208]],
  [[88, 215], [109, 190], [114, 200], [97, 221]],
  [[84, 210], [88, 210], [96, 246], [91, 247]],
  [[88, 212], [97, 218], [98, 242], [95, 245]],
  [[97, 246], [101, 243], [125, 256], [118, 265], [98, 255]]
];
nose.forEach(p => { poly(p, PAD, EDGE, 0.9); line(mix(p[0], p[3], 0.5), mix(p[1], p[2], 0.5), EDGE); });

// Upper run: rear pads, then the front row.
belt([[107, 181], [157, 177], [203, 172], [250, 166], [300, 160], [340, 155], [383, 152], [450, 149]],
     [[108, 191], [157, 188], [203, 183], [250, 177], [300, 170], [340, 165], [383, 160], [450, 157]], 17, 1, 0.8);
belt([[114, 190], [160, 186], [213, 180], [256, 174], [305, 168], [345, 163], [388, 158], [450, 155]],
     [[112, 201], [160, 197], [213, 190], [256, 185], [305, 177], [345, 172], [388, 167], [450, 163]], 15, 1, -0.6);
belt([[262, 167], [305, 162], [345, 158], [388, 154], [450, 151]],
     [[262, 173], [305, 168], [345, 164], [388, 160], [450, 157]], 17, 1, 1);
poly([[260, 154], [272, 153], [286, 158], [277, 161], [260, 157]], PAD, EDGE);
poly([[244, 162], [255, 160], [266, 166], [250, 167]], PAD, EDGE);
poly([[341, 151], [352, 150], [369, 156], [352, 158]], PAD, EDGE);

// Bounding box, floor grid and centre lines.
const green = "#7dac7d";
const A = [300, 176], B = [386, 165], C = [328, 153], D = [253, 161];
const a = [301, 278], b = [379, 257], d = [257, 247];
[[A, B], [B, C], [C, D], [D, A], [A, a], [B, b], [D, d], [C, [328, 194]]].forEach(([p, q]) => line(p, q, green, 0.9));
line(d, [262, 249], green);
const g = [[290, 271], a, b, [364, 251]];
for (let i = 0; i <= 10; i++) line(mix(g[0], g[3], i / 10), mix(g[1], g[2], i / 10), "#96bd96");
for (let i = 0; i <= 4; i++) line(mix(g[0], g[1], i / 4), mix(g[3], g[2], i / 4), "#96bd96");
line([256, 205], [328, 193], "#a878b0", 0.8);
line([293, 157], [293, 208], "#a878b0", 0.8);

scene.innerHTML = out.join("");
```
